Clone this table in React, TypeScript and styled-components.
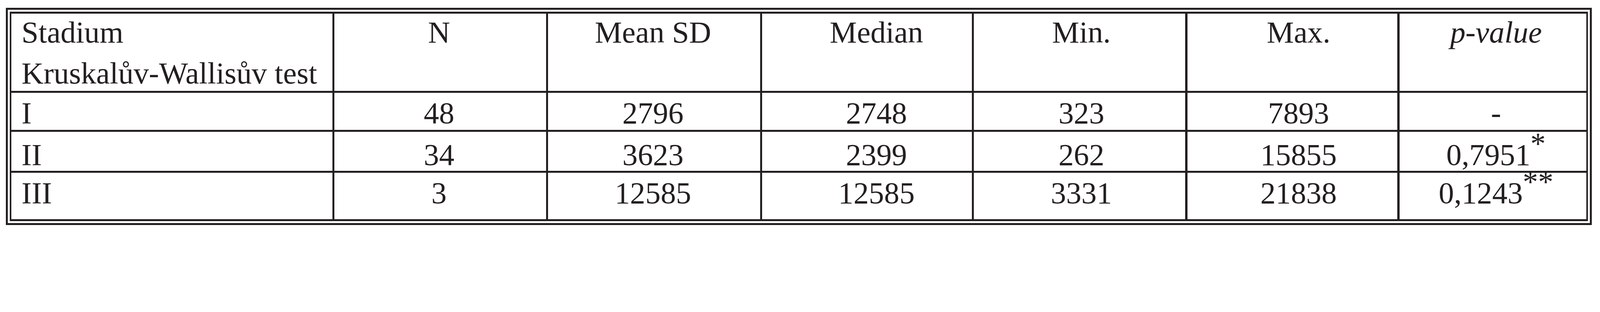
import React from 'react';
import styled, { createGlobalStyle } from 'styled-components';

const ink = '#231f20';

// the page is laid out at 4096 css px and photographed at 5441, so every
// measurement taken from the reference goes through this factor
const S = 4096 / 5441;
const u = (n: number) => `${(n * S).toFixed(3)}px`;

const GlobalStyle = createGlobalStyle`
  body {
    margin: 0;
    background: #ffffff;
  }
`;

// widths of the cell interiors, the grid gap draws the rules between them
const columns = [
  { key: 'stage', width: 1091, shift: 0 },
  { key: 'n', title: 'N', width: 720, shift: -8 },
  { key: 'mean', title: 'Mean SD', width: 721, shift: -8 },
  { key: 'median', title: 'Median', width: 713, shift: 64 },
  { key: 'min', title: 'Min.', width: 719, shift: 12 },
  { key: 'max', title: 'Max.', width: 714, shift: 42 },
  { key: 'p', title: 'p-value', width: 635, shift: 22, italic: true },
];

const rows = [
  { stage: 'I', n: '48', mean: '2796', median: '2748', min: '323', max: '7893', p: '-', mark: '', pad: 10 },
  { stage: 'II', n: '34', mean: '3623', median: '2399', min: '262', max: '15855', p: '0,7951', mark: '*', pad: 18 },
  { stage: 'III', n: '3', mean: '12585', median: '12585', min: '3331', max: '21838', p: '0,1243', mark: '**', pad: 10 },
];

function App() {
  return (
    <>
      <GlobalStyle />
      <Frame>
        <FrameInset>
          <Table>
            <StageHead>
              <HeadLine>Stadium</HeadLine>
              <HeadLine $second>Kruskalův-Wallisův test</HeadLine>
            </StageHead>
            {columns.slice(1).map((col) => (
              <HeadCell key={col.key} $shift={col.shift} $italic={col.italic}>
                {col.title}
              </HeadCell>
            ))}

            {rows.map((row) => (
              <React.Fragment key={row.stage}>
                <StageCell $pad={row.pad}>{row.stage}</StageCell>
                <Cell $pad={row.pad} $shift={columns[1].shift}>{row.n}</Cell>
                <Cell $pad={row.pad} $shift={columns[2].shift}>{row.mean}</Cell>
                <Cell $pad={row.pad} $shift={columns[3].shift}>{row.median}</Cell>
                <Cell $pad={row.pad} $shift={columns[4].shift}>{row.min}</Cell>
                <Cell $pad={row.pad} $shift={columns[5].shift}>{row.max}</Cell>
                <Cell $pad={row.pad} $shift={columns[6].shift}>
                  {row.p}
                  {row.mark && <Mark>{row.mark}</Mark>}
                </Cell>
              </React.Fragment>
            ))}
          </Table>
        </FrameInset>
      </Frame>
    </>
  );
}

export default App;

// outer rule of the double frame
const Frame = styled.div`
  display: inline-block;
  margin: ${u(27)} 0 0 ${u(20)};
  padding: ${u(6)};
  background: ${ink};
`;

// white gap between the two rules
const FrameInset = styled.div`
  padding: ${u(7)};
  background: #ffffff;
`;

const Table = styled.div`
  display: grid;
  grid-template-columns: ${columns.map((c) => u(c.width)).join(' ')};
  grid-template-rows: ${u(264)} ${u(127)} ${u(133)} ${u(159)};
  column-gap: ${u(7)};
  row-gap: ${u(6)};
  padding: ${u(6)};
  background: ${ink};
`;

const Cell = styled.div<{ $pad?: number; $shift?: number }>`
  background: #ffffff;
  color: ${ink};
  font-family: 'Liberation Serif', 'Times New Roman', serif;
  font-size: ${u(104)};
  line-height: ${u(120)};
  text-align: center;
  white-space: nowrap;
  box-sizing: border-box;
  padding-top: ${(p) => u(p.$pad ?? 4)};
  padding-left: ${(p) => u(Math.max(p.$shift ?? 0, 0))};
  padding-right: ${(p) => u(Math.max(-(p.$shift ?? 0), 0))};
`;

const HeadCell = styled(Cell)<{ $italic?: boolean }>`
  padding-top: ${u(4)};
  font-style: ${(p) => (p.$italic ? 'italic' : 'normal')};
`;

const StageCell = styled(Cell)`
  text-align: left;
  padding-left: ${u(34)};
`;

const StageHead = styled(StageCell)`
  padding-top: ${u(4)};
`;

const HeadLine = styled.div<{ $second?: boolean }>`
  margin-top: ${(p) => (p.$second ? u(20) : '0')};
`;

const Mark = styled.sup`
  font-size: 1em;
  line-height: 0;
  vertical-align: 0.37em;
`;
